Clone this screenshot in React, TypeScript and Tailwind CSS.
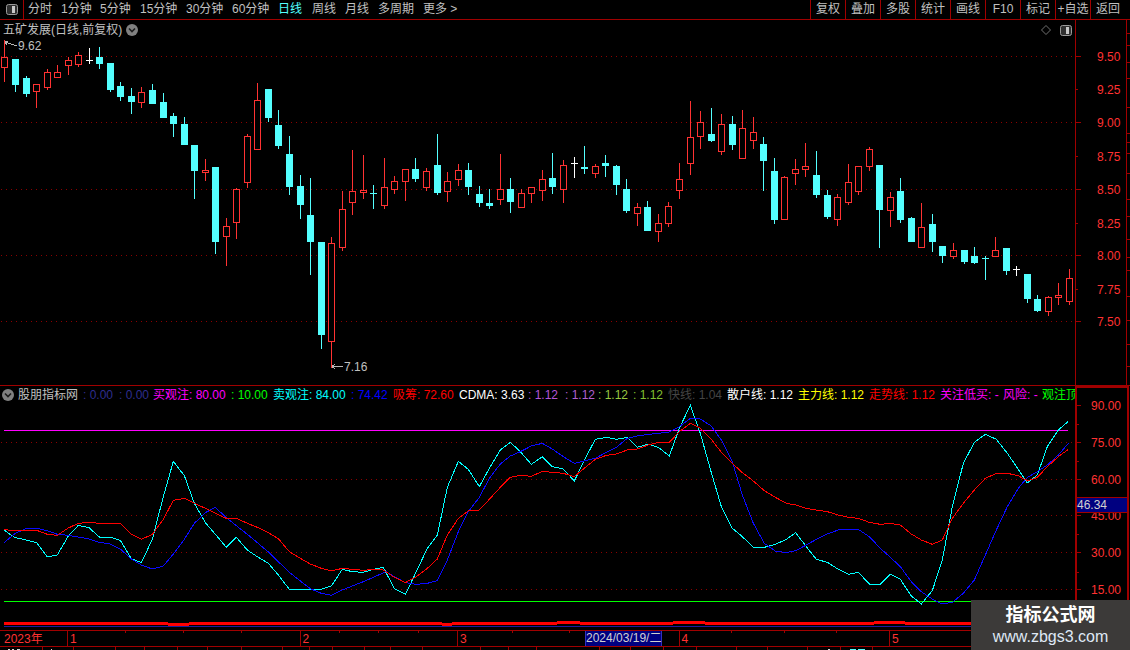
import React from 'react';

type Candle = [number, number, number, number, number, 'r' | 'c' | 'w' | 'x'];

const RED = '#ff3232';
const CYAN = '#54ffff';
const DARK = '#a00000';

// candle data in crop coordinates: x, high, top, bottom, low, kind
const seg1: Candle[] = [
  [13, -3, 52, 82, 125, 'r'], [46, 57, 57, 134, 155, 'c'], [79, 108, 114, 161, 170, 'c'], [109, 133, 133, 152, 203, 'r'],
  [142, 87, 97, 140, 149, 'r'], [172, 75, 97, 110, 113, 'r'], [205, 52, 61, 74, 104, 'r'], [235, 37, 46, 71, 80, 'r'],
  [267, 25, 59, 60, 71, 'w'], [298, 22, 52, 71, 86, 'c'], [331, 69, 69, 149, 155, 'c'], [361, 126, 138, 170, 182, 'c'],
  [394, 144, 168, 185, 221, 'c'], [424, 141, 157, 187, 203, 'r'], [457, 132, 150, 191, 191, 'c'], [490, 159, 186, 233, 233, 'c'],
  [520, 219, 228, 251, 290, 'c'], [553, 231, 252, 314, 314, 'c'], [583, 315, 315, 392, 476, 'c'], [616, 357, 391, 395, 422, 'r'],
  [646, 381, 381, 605, 641, 'c'], [679, 534, 559, 589, 677, 'r'], [709, 444, 448, 547, 596, 'r'], [742, 283, 289, 427, 445, 'r'],
  [772, 129, 181, 328, 328, 'r'], [805, 147, 147, 233, 245, 'c'], [835, 210, 255, 317, 326, 'c'], [868, 288, 342, 440, 464, 'c'],
  [901, 405, 438, 494, 536, 'c'], [931, 414, 525, 605, 704, 'c'], [964, 606, 606, 884, 926, 'c'], [994, 592, 610, 904, 985, 'r'],
  [1027, 454, 508, 622, 632, 'r'], [1057, 330, 454, 487, 524, 'r'], [1090, 345, 451, 455, 476, 'r'], [1120, 435, 459, 461, 506, 'x'],
];
const seg2: Candle[] = [
  [43, 204, 292, 346, 358, 'r'], [73, 258, 274, 298, 311, 'r'], [106, 238, 238, 274, 332, 'r'], [136, 205, 237, 266, 275, 'c'],
  [169, 235, 244, 292, 302, 'r'], [202, 132, 225, 308, 314, 'c'], [232, 247, 274, 304, 335, 'r'], [265, 222, 241, 268, 287, 'r'],
  [295, 219, 240, 290, 314, 'c'], [328, 289, 312, 338, 350, 'c'], [358, 297, 339, 347, 356, 'c'], [391, 192, 298, 328, 344, 'r'],
  [421, 264, 297, 335, 368, 'c'], [454, 298, 310, 352, 352, 'r'], [484, 292, 292, 310, 338, 'r'], [517, 240, 268, 301, 332, 'r'],
  [547, 189, 264, 290, 311, 'c'], [580, 210, 226, 298, 338, 'r'], [613, 201, 219, 220, 263, 'w'], [643, 168, 231, 236, 251, 'c'],
  [676, 222, 229, 250, 263, 'r'], [706, 195, 219, 227, 260, 'c'], [739, 225, 228, 284, 314, 'c'], [769, 267, 297, 362, 368, 'c'],
  [802, 339, 352, 370, 407, 'r'], [832, 333, 351, 422, 422, 'c'], [865, 373, 400, 424, 455, 'r'], [895, 336, 349, 400, 410, 'r'],
  [928, 219, 268, 301, 326, 'r'], [961, 33, 142, 220, 254, 'r'], [991, 63, 97, 139, 177, 'r'], [1024, 54, 132, 152, 155, 'c'],
  [1054, 72, 103, 184, 194, 'r'], [1087, 78, 102, 164, 180, 'c'], [1117, 60, 115, 205, 205, 'r'],
];
const seg3: Candle[] = [
  [40, 81, 127, 151, 177, 'r'], [70, 141, 162, 212, 302, 'c'], [103, 204, 243, 389, 401, 'c'], [133, 259, 262, 388, 388, 'r'],
  [166, 207, 238, 250, 285, 'r'], [196, 159, 229, 238, 261, 'r'], [229, 183, 255, 314, 323, 'c'], [262, 301, 315, 380, 386, 'c'],
  [292, 313, 322, 388, 407, 'r'], [325, 222, 277, 337, 344, 'r'], [355, 229, 229, 304, 314, 'r'], [388, 171, 178, 229, 242, 'r'],
  [418, 225, 225, 359, 473, 'c'], [451, 307, 322, 361, 410, 'r'], [481, 264, 303, 389, 398, 'c'], [514, 381, 384, 455, 455, 'c'],
  [544, 339, 412, 472, 472, 'r'], [577, 372, 402, 455, 485, 'c'], [607, 468, 468, 497, 518, 'c'], [640, 459, 481, 499, 506, 'r'],
  [673, 480, 480, 515, 521, 'c'], [703, 471, 498, 518, 521, 'c'], [736, 497, 504, 506, 569, 'x'], [766, 441, 481, 499, 499, 'r'],
  [799, 474, 474, 542, 554, 'c'], [829, 528, 537, 539, 557, 'w'], [862, 552, 552, 626, 638, 'c'], [892, 615, 627, 662, 665, 'c'],
  [925, 619, 622, 664, 677, 'r'], [955, 579, 616, 622, 644, 'r'], [988, 537, 565, 634, 644, 'r'],
];

const cyanA = [12,390,30,403,46,413,79,420,110,428,142,471,172,465,205,408,235,376,267,383,298,411,331,411,361,421,394,476,424,488,457,418,490,290,520,184,553,227,583,310,616,368,646,403,679,442,709,412,742,450,772,470,805,490,835,525,868,568,901,568,931,568,964,568,994,558,1027,508,1057,515,1090,517,1120,508];
const cyanB = [25,502,58,566,91,583,124,515,157,445,187,405,217,262,250,184,280,208,313,260,343,205,376,150,406,127,436,155,469,193,502,170,532,200,565,207,598,243,631,175,661,118,694,112,724,118,757,112,787,142,820,132,850,142,883,168,913,85,946,16,976,100,1009,218,1039,320,1072,385,1102,410,1135,442];
const cyanC = [43,442,76,433,109,418,137,398,169,440,199,478,232,487,265,508,295,523,325,517,358,552,391,552,421,522,451,538,484,588,514,612,547,572,577,480,607,320,640,190,673,127,706,103,739,118,772,160,805,208,832,249,862,225,892,140,925,90,955,64];
const blueA = [12,428,46,400,79,385,110,385,142,392,172,403,205,406,235,411,267,417,298,427,331,432,361,447,394,477,424,495,457,507,490,498,520,462,553,418,583,370,616,338,646,322,679,353,709,377,742,403,772,428,805,456,835,485,868,517,901,543,931,566,964,580,994,586,1027,570,1057,558,1090,545,1120,532];
const blueB = [33,515,58,530,91,548,124,553,157,550,187,542,217,480,250,395,280,335,313,292,343,235,376,192,406,168,436,155,469,138,502,130,532,147,565,170,598,190,631,182,661,175,694,157,724,142,757,115,787,108,820,103,850,100,883,96,913,80,946,55,976,57,1009,78,1039,120,1072,185,1102,285,1135,370];
const blueC = [43,430,76,453,109,458,137,452,169,435,199,418,232,402,265,390,295,388,325,388,358,410,391,445,421,472,451,500,484,545,514,575,547,597,577,612,607,607,640,580,673,540,706,465,739,390,772,320,805,265,832,232,862,215,892,195,925,165,955,130];
const redA = [12,388,30,391,110,391,142,403,172,406,205,384,235,370,267,367,298,370,361,370,394,403,424,418,457,403,490,358,520,301,553,295,583,310,616,325,646,340,679,355,709,355,742,370,772,382,805,398,835,416,868,455,901,475,931,492,964,505,994,513,1027,505,1057,508,1090,511,1120,508];
const redB = [25,510,58,532,91,548,124,530,157,505,187,477,217,405,250,355,280,333,313,330,343,298,376,262,406,232,436,226,469,229,502,214,532,217,565,220,598,230,631,202,661,178,694,166,724,162,757,150,787,147,820,135,850,127,883,127,913,95,946,70,976,85,1009,118,1039,157,1072,190,1102,218,1135,243];
const redC = [43,272,76,292,109,310,137,315,169,325,199,330,232,335,265,345,295,352,325,355,358,367,391,373,421,370,451,375,484,402,514,420,547,433,577,420,607,355,640,310,673,270,706,235,739,220,772,220,805,227,832,243,862,232,892,200,925,170,955,148];

function pts(a: number[], b: number[], c: number[]) {
  const out: string[] = [];
  const add = (arr: number[], xoff: number) => {
    for (let i = 0; i < arr.length; i += 2) out.push(`${xoff + arr[i] / 3},${400 + arr[i + 1] / 3}`);
  };
  add(a, 0);
  add(b, 375);
  add(c, 750);
  return out.join(' ');
}

const leftTabs = [
  { label: '分时', cls: 'w-[33px]' },
  { label: '1分钟', cls: 'w-[39px]' },
  { label: '5分钟', cls: 'w-[40px]' },
  { label: '15分钟', cls: 'w-[46px]' },
  { label: '30分钟', cls: 'w-[46px]' },
  { label: '60分钟', cls: 'w-[46px]' },
  { label: '日线', cls: 'w-[34px] text-[#54ffff]' },
  { label: '周线', cls: 'w-[33px]' },
  { label: '月线', cls: 'w-[33px]' },
  { label: '多周期', cls: 'w-[45px]' },
  { label: '更多 >', cls: 'w-[40px]' },
];

const rightTabs = ['复权', '叠加', '多股', '统计', '画线', 'F10', '标记', '+自选', '返回'];

const legend = [
  { t: '股朋指标网', cls: 'w-[65px] text-[#c0c0c0]' },
  { t: ': 0.00', cls: 'w-[36px] text-[#2e2e8e]' },
  { t: ': 0.00', cls: 'w-[34px] text-[#2e2e8e]' },
  { t: '买观注: 80.00', cls: 'w-[78px] text-[#ff00ff]' },
  { t: ': 10.00', cls: 'w-[42px] text-[#00ff00]' },
  { t: '卖观注: 84.00', cls: 'w-[78px] text-[#00ffff]' },
  { t: ': 74.42', cls: 'w-[42px] text-[#0000ff]' },
  { t: '吸筹: 72.60', cls: 'w-[66px] text-[#ff0000]' },
  { t: 'CDMA: 3.63', cls: 'w-[69px] text-white' },
  { t: ': 1.12', cls: 'w-[37px] text-[#b455d8]' },
  { t: ': 1.12', cls: 'w-[33px] text-[#b060d0]' },
  { t: ': 1.12', cls: 'w-[35px] text-[#98c840]' },
  { t: ': 1.12', cls: 'w-[35px] text-[#80c030]' },
  { t: '快线: 1.04', cls: 'w-[59px] text-[#444444]' },
  { t: '散户线: 1.12', cls: 'w-[71px] text-white' },
  { t: '主力线: 1.12', cls: 'w-[71px] text-[#ffff00]' },
  { t: '走势线: 1.12', cls: 'w-[71px] text-[#ff0000]' },
  { t: '关注低买: -', cls: 'w-[63px] text-[#ff00ff]' },
  { t: '风险: -', cls: 'w-[39px] text-[#ff00ff]' },
  { t: '观注顶', cls: 'w-[33px] text-[#00ff00]' },
];

const priceTicks: [number, string, number][] = [
  [56, '9.50', 6], [89, '9.25', 3], [122, '9.00', 6], [156, '8.75', 3], [189, '8.50', 6],
  [223, '8.25', 3], [255, '8.00', 6], [289, '7.75', 3], [321, '7.50', 6],
];
const sideTicks = [33, 45, 62, 78, 107, 133, 142, 153, 173, 199, 216, 239, 257, 270, 296, 320, 344, 366];
const indTicks: [number, string][] = [[405, '90.00'], [442, '75.00'], [479, '60.00'], [515, '45.00'], [552, '30.00'], [589, '15.00']];
const minorInd = [424, 461, 497, 534, 572, 608];
const dayLines: [number, string][] = [[67, '1'], [299.5, '2'], [457, '3'], [678.5, '4'], [889, '5']];
const smallTicks = [125, 183, 241, 339, 378, 418, 512, 569, 731, 784, 836];
const bottomTicks = [42, 73, 115, 144, 177, 207, 241, 282, 309, 332, 364, 390, 422, 480, 508, 536, 599, 630, 663, 696, 736, 767, 807, 840, 872];
const clippedMarks: [number, number, string][] = [[8, 2, '#d8d8d8'], [12, 2, '#d8d8d8'], [17, 3, '#d8d8d8'], [51, 1, '#d8d8d8'], [828, 2, '#d8d8d8'], [850, 6, '#54ffff'], [858, 7, '#54ffff']];
const bandBase = [[4, 168], [189, 442], [452, 557], [580, 673], [705, 874], [905, 1068]];
const bandLow = [[168, 189], [442, 452]];
const bandHigh = [[557, 580], [673, 705], [874, 905]];

function Candles({ data, xoff, yoff }: { data: Candle[]; xoff: number; yoff: number }) {
  return (
    <>
      {data.map(([zx, hi, top, bot, lo, kind]) => {
        const cx = Math.floor(xoff + zx / 3) + 0.5;
        const y = (v: number) => Math.round(yoff + v / 3);
        const color = kind === 'r' ? RED : kind === 'w' ? '#ffffff' : CYAN;
        if (kind === 'w' || kind === 'x') {
          return (
            <g key={zx} stroke={color}>
              <line x1={cx} x2={cx} y1={y(hi)} y2={y(lo)} />
              <line x1={cx - 3.5} x2={cx + 3.5} y1={y(top) + 0.5} y2={y(top) + 0.5} />
            </g>
          );
        }
        if (kind === 'c') {
          return (
            <g key={zx}>
              <line x1={cx} x2={cx} y1={y(hi)} y2={y(lo)} stroke={color} />
              <rect x={cx - 3.5} y={y(top)} width={7} height={Math.max(1, y(bot) - y(top))} fill={color} />
            </g>
          );
        }
        return (
          <g key={zx} stroke={color}>
            <line x1={cx} x2={cx} y1={y(hi)} y2={y(top)} />
            <line x1={cx} x2={cx} y1={y(bot)} y2={y(lo)} />
            <rect x={cx - 3} y={y(top) + 0.5} width={6} height={Math.max(1, y(bot) - y(top))} fill="#000000" />
          </g>
        );
      })}
    </>
  );
}

function GridLines({ ys }: { ys: number[] }) {
  return (
    <g stroke="#8c0000" strokeDasharray="1 4">
      {ys.map((y) => (
        <line key={y} x1={1} x2={1075} y1={y + 0.5} y2={y + 0.5} />
      ))}
    </g>
  );
}

function Chevron({ className }: { className: string }) {
  return (
    <svg className={className} viewBox="0 0 12 12">
      <circle cx="6" cy="6" r="6" fill="#808080" />
      <path d="M3 4.5 L6 7.5 L9 4.5" fill="none" stroke="#1c1c1c" strokeWidth="1.6" />
    </svg>
  );
}

function PanelIcon({ className }: { className: string }) {
  return (
    <svg className={className} viewBox="0 0 12 11">
      <rect x="0.5" y="0.5" width="11" height="10" rx="2" fill="#303030" stroke="#9a9a9a" />
      <rect x="6" y="2" width="3" height="7" fill="#c8c8c8" />
    </svg>
  );
}

function MainChart() {
  return (
    <svg className="block w-[1075px] h-[345px]" viewBox="0 40 1075 345" shapeRendering="crispEdges">
      <GridLines ys={[56, 122, 189, 255, 321]} />
      <Candles data={seg1} xoff={0} yoff={40} />
      <Candles data={seg2} xoff={370} yoff={90} />
      <Candles data={seg3} xoff={740} yoff={90} />
      <path d="M5 42 L17 46 M5 42 L8 41 M5 42 L7 45" fill="none" stroke="#b8b8b8" />
      <text x="18" y="50" fontSize="12" fill="#c0c0c0" shapeRendering="auto">9.62</text>
      <path d="M332 366.5 L343 366.5 M332 366.5 L335 364 M332 366.5 L335 369" fill="none" stroke="#b8b8b8" />
      <text x="344" y="371" fontSize="12" fill="#c0c0c0" shapeRendering="auto">7.16</text>
    </svg>
  );
}

function MainAxis() {
  return (
    <svg className="block w-[54px] h-[365px]" viewBox="1076 20 54 365" shapeRendering="crispEdges">
      <line x1="1126.5" x2="1126.5" y1="20" y2="385" stroke={DARK} />
      {sideTicks.map((y) => (
        <line key={y} x1="1127" x2="1130" y1={y + 0.5} y2={y + 0.5} stroke={DARK} />
      ))}
      {priceTicks.map(([y, label, len]) => (
        <g key={label}>
          <line x1="1076" x2={1075 + len} y1={y + 0.5} y2={y + 0.5} stroke={DARK} />
          <text x="1097" y={y + 5} fontSize="12" fill={RED} shapeRendering="auto">{label}</text>
        </g>
      ))}
    </svg>
  );
}

function IndicatorChart() {
  return (
    <svg className="block w-[1075px] h-[226px]" viewBox="0 404 1075 226">
      <g shapeRendering="crispEdges">
        <GridLines ys={[442, 479, 515, 552, 589]} />
        <line x1="4" x2="1068" y1="430.5" y2="430.5" stroke="#ff00ff" />
        <line x1="4" x2="1068" y1="601.5" y2="601.5" stroke="#00ff00" />
        {bandBase.map(([a, b]) => <rect key={a} x={a} y={622} width={b - a} height={3} fill="#ff0000" />)}
        {bandLow.map(([a, b]) => <rect key={a} x={a} y={623} width={b - a} height={3} fill="#ff0000" />)}
        {bandHigh.map(([a, b]) => <rect key={a} x={a} y={621} width={b - a} height={3} fill="#ff0000" />)}
        <rect x="4" y="626" width="1064" height="1" fill="#1c1c9c" />
      </g>
      <g fill="none" strokeWidth="1" shapeRendering="crispEdges">
        <polyline points={pts(cyanA, cyanB, cyanC)} stroke="#00ffff" />
        <polyline points={pts(blueA, blueB, blueC)} stroke="#0a0aff" />
        <polyline points={pts(redA, redB, redC)} stroke="#ff0000" />
      </g>
    </svg>
  );
}

function IndicatorAxis() {
  return (
    <div className="relative w-[54px] h-full border-l-2 border-t-2 border-r-2 border-[#a00000] mr-[1px]">
      <svg className="block w-[50px] h-[242px]" viewBox="1077 388 50 242" shapeRendering="crispEdges">
        {indTicks.map(([y, label]) => (
          <g key={label}>
            <line x1="1077" x2="1081" y1={y + 0.5} y2={y + 0.5} stroke={DARK} />
            <text x="1091" y={y + 5} fontSize="12" fill={RED} shapeRendering="auto">{label}</text>
          </g>
        ))}
        {minorInd.map((y) => (
          <line key={y} x1="1077" x2="1079" y1={y + 0.5} y2={y + 0.5} stroke={DARK} />
        ))}
      </svg>
      <div className="absolute left-0 top-[109px] w-[50px] h-[16px] bg-[#000080] border-y border-[#a00000] text-[12px] leading-[14px] text-[#d0d0d0]">
        46.34
      </div>
    </div>
  );
}

function TimeAxis() {
  return (
    <div className="relative h-[17px] border-y border-[#a00000]">
      <svg className="block w-[1130px] h-[15px]" viewBox="0 631 1130 15" shapeRendering="crispEdges">
        {smallTicks.map((x) => (
          <line key={x} x1={x + 0.5} x2={x + 0.5} y1="631" y2="633" stroke={DARK} />
        ))}
        {dayLines.map(([x, label]) => (
          <g key={label}>
            <line x1={x + 0.5} x2={x + 0.5} y1="631" y2="646" stroke={DARK} />
            <text x={x + 3} y="643" fontSize="12" fill={RED} shapeRendering="auto">{label}</text>
          </g>
        ))}
        <text x="4" y="643" fontSize="12" fill={RED} shapeRendering="auto">2023年</text>
      </svg>
      <div className="absolute left-[585px] top-0 w-[77px] h-[15px] bg-[#000080] border-x border-[#3030c0] text-[12px] leading-[15px] text-[#d0d0d0] text-center whitespace-nowrap">
        2024/03/19/二
      </div>
    </div>
  );
}

export default function App() {
  return (
    <div className="relative w-[1130px] h-[650px] bg-black overflow-hidden flex flex-col [font-family:'Liberation_Sans','Noto_Sans_CJK_SC',sans-serif]">
      {/* top bar */}
      <div className="flex h-[20px] shrink-0 border-b border-[#a00000] text-[12px] leading-[19px] text-[#c0c0c0]">
        <div className="w-[24px] flex items-center justify-center border-r border-[#a00000]">
          <PanelIcon className="w-[12px] h-[11px]" />
        </div>
        <div className="flex pl-[4px]">
          {leftTabs.map((tab) => (
            <span key={tab.label} className={`shrink-0 whitespace-nowrap ${tab.cls}`}>{tab.label}</span>
          ))}
        </div>
        <div className="ml-auto flex">
          {rightTabs.map((tab) => (
            <span key={tab} className="w-[35px] text-center border-l border-[#a00000] whitespace-nowrap">{tab}</span>
          ))}
          <span className="w-[5px]"></span>
        </div>
      </div>

      {/* candles */}
      <div className="flex h-[366px] shrink-0 border-b border-[#a00000]">
        <div className="w-[1075px] flex flex-col">
          <div className="flex items-center h-[20px] text-[12px] text-[#c0c0c0] pl-[3px]">
            <span>五矿发展(日线,前复权)</span>
            <Chevron className="w-[12px] h-[12px] ml-[4px]" />
            <svg className="w-[10px] h-[10px] ml-auto" viewBox="0 0 10 10">
              <path d="M5 0.5 L9.5 5 L5 9.5 L0.5 5 Z" fill="none" stroke="#707070" />
            </svg>
            <PanelIcon className="w-[12px] h-[11px] ml-[9px] mr-[3px]" />
          </div>
          <MainChart />
        </div>
        <div className="border-l border-[#a00000]">
          <MainAxis />
        </div>
      </div>

      {/* indicator */}
      <div className="flex h-[244px] shrink-0">
        <div className="w-[1075px] flex flex-col">
          <div className="flex items-center h-[18px] overflow-hidden text-[12px] pl-[2px]">
            <Chevron className="w-[12px] h-[12px] shrink-0 mr-[4px]" />
            {legend.map((item, i) => (
              <span key={i} className={`shrink-0 whitespace-nowrap overflow-hidden ${item.cls}`}>{item.t}</span>
            ))}
          </div>
          <IndicatorChart />
        </div>
        <IndicatorAxis />
      </div>

      <TimeAxis />

      {/* row under the time axis, only the top pixels are on screen */}
      <svg className="block w-[1130px] h-[3px]" viewBox="0 647 1130 3" shapeRendering="crispEdges">
        {bottomTicks.map((x) => (
          <line key={x} x1={x + 0.5} x2={x + 0.5} y1="647" y2="650" stroke={DARK} />
        ))}
        {clippedMarks.map(([x, w, color]) => (
          <rect key={x} x={x} y={649} width={w} height={1} fill={color} />
        ))}
      </svg>

      {/* watermark */}
      <div className="absolute right-0 bottom-0 w-[159px] h-[50px] bg-[#3c3a39] flex flex-col items-center justify-center">
        <span className="text-[18px] leading-[24px] font-bold text-white">指标公式网</span>
        <span className="text-[16px] leading-[20px] text-[#dfe8f5]">www.zbgs3.com</span>
      </div>
    </div>
  );
}
